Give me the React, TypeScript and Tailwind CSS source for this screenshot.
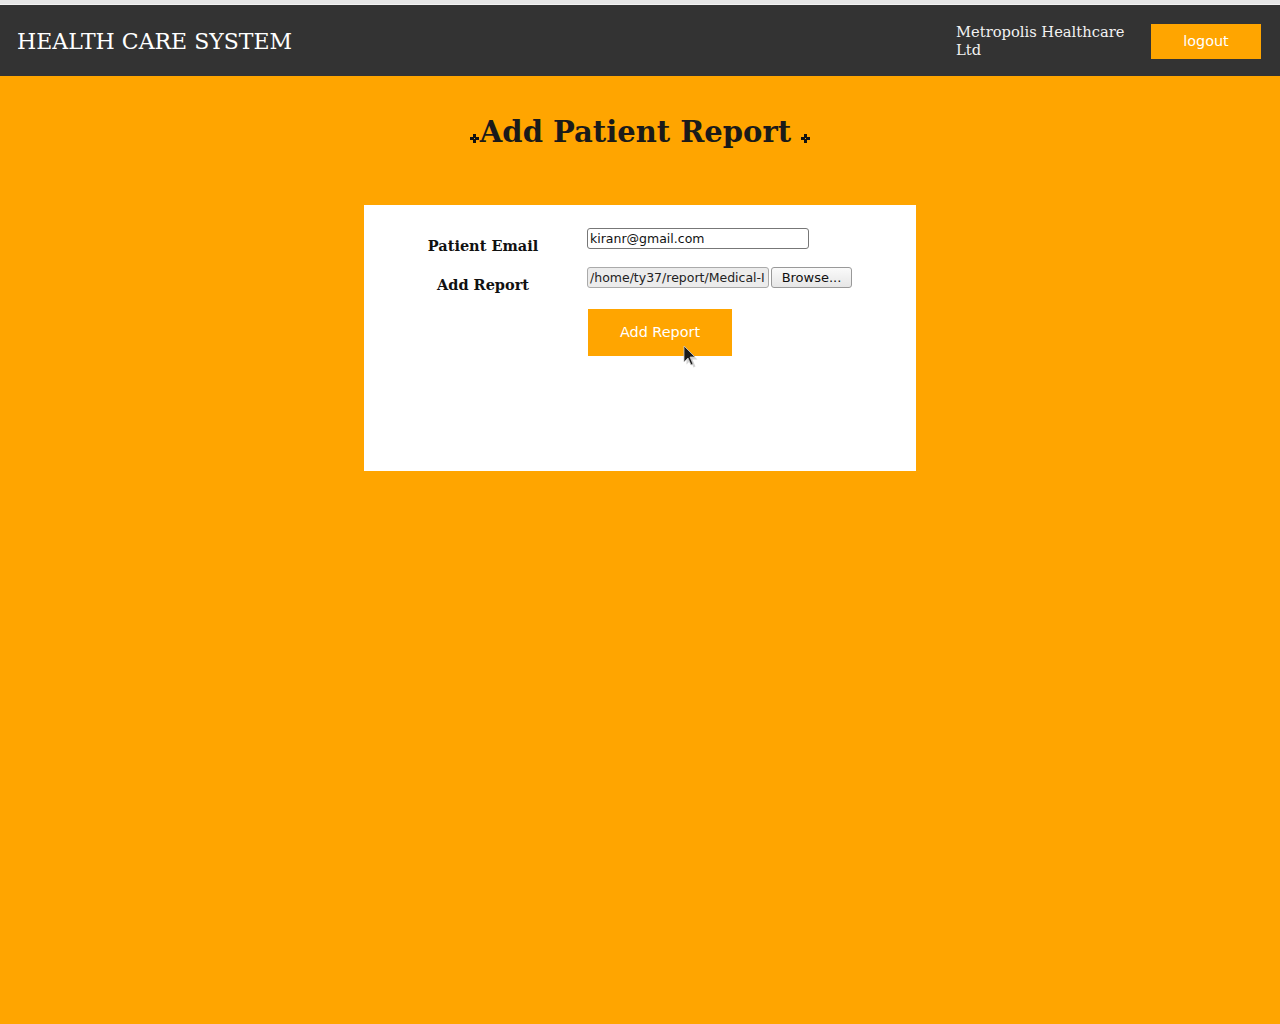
import React from 'react';

const serif = { fontFamily: '"DejaVu Serif", "Liberation Serif", serif' };
const sans = { fontFamily: '"DejaVu Sans", "Liberation Sans", sans-serif' };

// small cross-shaped bullet beside the page title
const Ornament: React.FC = () => (
  <svg width="9" height="9" viewBox="0 0 9 9" className="block">
    <path fillRule="evenodd" d="M3 0h3v3h3v3h-3v3h-3v-3h-3v-3h3z M4 4v1h1v-1z" fill="#111" />
  </svg>
);

const Cursor: React.FC = () => (
  <svg width="16" height="24" viewBox="0 0 16 24" className="absolute left-[96px] top-[39px]">
    <path d="M2 2 L2 18 L6 14 L9 21 L11 20 L8 13 L13 13 Z" fill="#aaa" opacity="0.5" transform="translate(1.5 1.5)" />
    <path d="M1 1 L1 17 L5 13 L8 20 L10 19 L7 12 L12 12 Z" fill="#1a1a1a" stroke="#ccc" strokeWidth="0.8" />
  </svg>
);

export default function App() {
  return (
    <div className="min-h-[1024px] bg-[#ffa500]">
      <div className="h-[5px] bg-[#e6e6e6] border-b border-[#f4f4f4]" />
      <header className="h-[71px] bg-[#333333] flex items-center justify-between pl-[17px] pr-[19px]">
        <h1 className="text-[22px] text-white leading-none translate-y-[1px]" style={serif}>HEALTH CARE SYSTEM</h1>
        <div className="flex items-center">
          <div className="w-[180px] text-[14.7px] leading-[18px] text-[#f2f2f2] mr-[15px]" style={serif}>
            Metropolis Healthcare Ltd
          </div>
          <button className="w-[110px] h-[35px] mt-[2px] bg-[#ffa500] text-white text-[14.4px]" style={sans}>
            logout
          </button>
        </div>
      </header>

      <div className="flex items-center justify-center pt-[36px]">
        <h2 className="flex items-end text-[29px] font-bold text-[#1a1a1a] leading-[40px]" style={serif}>
          <span className="mb-[9px] mr-[1px]"><Ornament /></span>
          <span>Add Patient Report</span>
          <span className="mb-[9px] ml-[10px]"><Ornament /></span>
        </h2>
      </div>

      <div className="flex justify-center mt-[53px]">
        <div className="w-[552px] h-[266px] bg-white pt-[23px]">
          <div className="grid grid-cols-[223px_1fr] gap-y-[18px]">
            <div className="flex items-end justify-center h-[21px] pl-[15px] text-[14.5px] font-bold text-[#111]" style={serif}>
              <span className="translate-y-[8px]">Patient Email</span>
            </div>
            <div>
              <div
                className="w-[222px] h-[21px] border border-[#777] rounded-[3px] bg-white text-[12.5px] text-[#111] px-[2px] leading-[19px]"
                style={sans}
              >
                kiranr@gmail.com
              </div>
            </div>

            <div className="flex items-end justify-center h-[21px] pl-[15px] text-[14.5px] font-bold text-[#111]" style={serif}>
              <span className="translate-y-[8px]">Add Report</span>
            </div>
            <div className="flex gap-[2px]">
              <div
                className="w-[182px] h-[21px] border border-[#aaa] rounded-[3px] bg-[#ececec] text-[12.5px] text-[#222] pl-[2px] leading-[19px] overflow-hidden whitespace-nowrap"
                style={sans}
              >
                /home/ty37/report/Medical-I
              </div>
              <div
                className="w-[81px] h-[21px] border border-[#999] rounded-[3px] bg-gradient-to-b from-[#fafafa] to-[#e6e6e6] text-[13px] text-[#111] leading-[19px] text-center"
                style={sans}
              >
                Browse...
              </div>
            </div>

            <div />
            <div className="relative pt-[3px] pl-[1px]">
              <button className="w-[144px] h-[47px] bg-[#ffa500] text-white text-[14.4px]" style={sans}>
                Add Report
              </button>
              <Cursor />
            </div>
          </div>
        </div>
      </div>
    </div>
  );
}
